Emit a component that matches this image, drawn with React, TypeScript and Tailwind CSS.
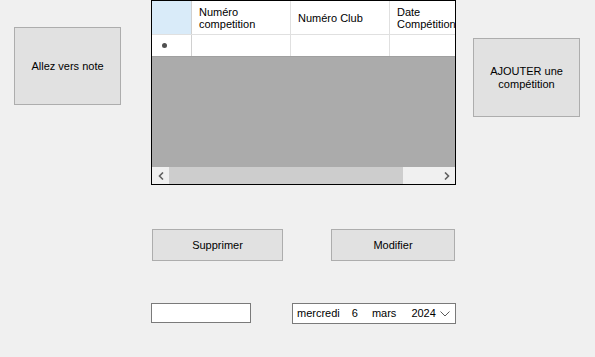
const font = { fontFamily: '"Liberation Sans", Arial, sans-serif' };

function WinButton({ label, className }: { label: React.ReactNode; className: string }) {
  return (
    <button
      className={`flex items-center justify-center border border-[#adadad] bg-[#e1e1e1] text-center text-[11px] leading-[13px] text-black ${className}`}
    >
      {label}
    </button>
  );
}

function Chevron({ dir }: { dir: "left" | "right" | "down" }) {
  if (dir === "down") {
    return (
      <svg width="10" height="6" viewBox="0 0 10 6" fill="none">
        <path d="M0.5 0.5 L5 5 L9.5 0.5" stroke="#5a5a5a" strokeWidth="1" />
      </svg>
    );
  }
  return (
    <svg width="6" height="8" viewBox="0 0 6 8" fill="none">
      <path
        d={dir === "left" ? "M5 0.5 L1.5 4 L5 7.5" : "M1 0.5 L4.5 4 L1 7.5"}
        stroke="#606060"
        strokeWidth="1.6"
      />
    </svg>
  );
}

function DataGrid() {
  return (
    <div className="ml-[30px] flex h-[185px] w-[305px] flex-col overflow-hidden border border-black bg-[#ababab]">
      {/* header row */}
      <div className="flex h-[34px] shrink-0 border-b border-[#e0e0e0] bg-white text-[11px] leading-[12px] text-black">
        <div className="w-[40px] shrink-0 border-r border-[#d0d0d0] bg-[#d9ebf9]" />
        <div className="flex w-[99px] shrink-0 items-center border-r border-[#e0e0e0] pl-[7px]">
          Numéro
          <br />
          competition
        </div>
        <div className="flex w-[99px] shrink-0 items-center border-r border-[#e0e0e0] pl-[7px]">Numéro Club</div>
        <div className="flex shrink-0 items-center whitespace-nowrap pl-[7px]">
          Date
          <br />
          Compétition
        </div>
      </div>
      {/* new row */}
      <div className="flex h-[22px] shrink-0 border-b border-[#a0a0a0] bg-white">
        <div className="flex w-[40px] shrink-0 items-center border-r border-[#d0d0d0] pl-[10px]">
          <span className="block h-[5px] w-[5px] rounded-full bg-[#505050]" />
        </div>
        <div className="w-[99px] shrink-0 border-r border-[#e0e0e0]" />
        <div className="w-[99px] shrink-0 border-r border-[#e0e0e0]" />
        <div className="flex-1" />
      </div>
      <div className="flex-1" />
      {/* horizontal scrollbar */}
      <div className="flex h-[17px] shrink-0 items-center bg-[#f0f0f0]">
        <div className="flex w-[17px] shrink-0 items-center justify-center">
          <Chevron dir="left" />
        </div>
        <div className="h-full w-[234px] bg-[#cdcdcd]" />
        <div className="flex-1" />
        <div className="flex w-[17px] shrink-0 items-center justify-center">
          <Chevron dir="right" />
        </div>
      </div>
    </div>
  );
}

export default function App() {
  return (
    <div className="h-[357px] w-[595px] overflow-hidden bg-[#f0f0f0]" style={font}>
      <div className="flex items-start">
        <WinButton label="Allez vers note" className="ml-[14px] mt-[27px] h-[78px] w-[107px]" />
        <DataGrid />
        <WinButton
          label={
            <span>
              AJOUTER une
              <br />
              compétition
            </span>
          }
          className="ml-[17px] mt-[38px] h-[79px] w-[107px]"
        />
      </div>

      <div className="mt-[44px] flex">
        <WinButton label="Supprimer" className="ml-[152px] h-[32px] w-[131px]" />
        <WinButton label="Modifier" className="ml-[48px] h-[32px] w-[124px]" />
      </div>

      <div className="mt-[42px] flex items-start">
        <div className="ml-[151px] h-[20px] w-[100px] border border-[#7a7a7a] bg-white" />
        <div className="ml-[41px] flex h-[21px] w-[164px] items-center border border-[#7a7a7a] bg-white pl-[4px] pr-[4px] text-[11px] text-black">
          <span>mercredi</span>
          <span className="ml-[12px]">6</span>
          <span className="ml-[14px]">mars</span>
          <span className="ml-[15px]">2024</span>
          <span className="ml-auto flex items-center pr-[1px]">
            <Chevron dir="down" />
          </span>
        </div>
      </div>
    </div>
  );
}
